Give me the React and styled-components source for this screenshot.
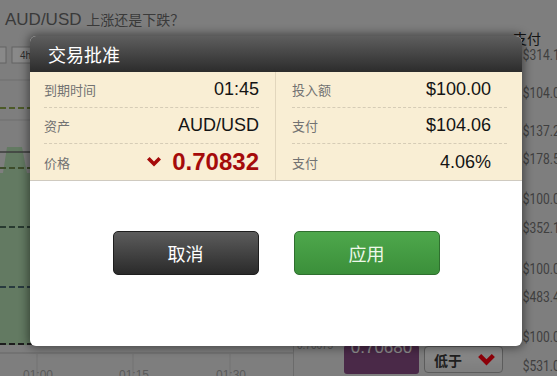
import React from "react";
import styled, { createGlobalStyle } from "styled-components";

const GlobalStyle = createGlobalStyle`
  html, body {
    margin: 0;
    padding: 0;
  }
  body {
    width: 557px;
    height: 376px;
    overflow: hidden;
    background: #e6e6e6;
    font-family: "Liberation Sans", "Noto Sans CJK SC", sans-serif;
  }
`;

const Page = styled.div`
  position: relative;
  width: 557px;
  height: 376px;
  display: flex;
  overflow: hidden;
  background: #e6e6e6;
`;

const Main = styled.div`
  width: 510px;
  display: flex;
  flex-direction: column;
`;

const Title = styled.div`
  height: 40px;
  box-sizing: border-box;
  padding: 9px 0 0 5px;
  font-size: 17px;
  line-height: 20px;
  color: #6a6a6a;
`;

const TitleCn = styled.span`
  font-size: 14px;
  font-family: "Noto Sans CJK SC", sans-serif;
`;

const Plot = styled.svg`
  display: block;
  width: 510px;
  height: 305px;
`;

const BottomRow = styled.div`
  height: 31px;
  display: flex;
`;

const Axis = styled.svg`
  display: block;
  width: 293px;
  height: 31px;
`;

const Controls = styled.div`
  flex: 1;
  display: flex;
  align-items: flex-start;
  border-left: 1px solid #c4c4c4;
`;

const LastPrice = styled.div`
  width: 47px;
  margin-top: -5px;
  padding-left: 3px;
  font-size: 10px;
  color: #9a9a9a;
`;

const PriceBox = styled.div`
  width: 75px;
  height: 29px;
  border-radius: 3px;
  background: #874c83;
  color: #ffffff;
  font-size: 17px;
  line-height: 5px;
  text-align: center;
`;

const DirButton = styled.div`
  margin: 1px 0 0 5px;
  width: 79px;
  height: 27px;
  box-sizing: border-box;
  display: flex;
  align-items: center;
  justify-content: space-between;
  padding: 0 7px 0 9px;
  border: 1px solid #a8a8a8;
  border-radius: 4px;
  background: linear-gradient(#ffffff, #e4e4e4);
  color: #3a3a3a;
  font-size: 14px;
  font-weight: bold;
  font-family: "Noto Sans CJK SC", sans-serif;
`;

const Side = styled.div`
  flex: 1;
  padding-top: 30px;
  overflow: hidden;
`;

const SideHead = styled.div`
  padding-left: 3px;
  font-size: 14px;
  line-height: 16px;
  color: #262626;
  font-family: "Noto Sans CJK SC", sans-serif;
`;

const Payout = styled.div`
  margin-top: ${({ $gap }) => $gap}px;
  padding-left: 16px;
  font-family: Roboto, sans-serif;
  font-size: 15px;
  line-height: 14px;
  color: #747474;
  white-space: nowrap;
  transform: scaleX(0.8);
  transform-origin: left center;
`;

const Dim = styled.div`
  position: absolute;
  inset: 0;
  background: rgba(0, 0, 0, 0.45);
`;

const Modal = styled.div`
  position: absolute;
  left: 30px;
  top: 36px;
  width: 492px;
  height: 310px;
  border-radius: 6px;
  overflow: hidden;
  background: #ffffff;
  box-shadow: 0 0 10px 2px rgba(0, 0, 0, 0.45);
  display: flex;
  flex-direction: column;
`;

const ModalHead = styled.div`
  height: 36px;
  flex: none;
  display: flex;
  align-items: center;
  padding-left: 18px;
  background: linear-gradient(#5e5e5e, #2c2c2c);
  color: #ffffff;
  font-size: 18px;
  font-family: "Noto Sans CJK SC", sans-serif;
`;

const Info = styled.div`
  display: flex;
  background: #f9eed4;
  border-bottom: 1px solid #cfcac0;
`;

const InfoCol = styled.div`
  box-sizing: border-box;
  width: ${({ $w }) => $w}px;
  padding: ${({ $pad }) => $pad};
  border-right: ${({ $line }) => ($line ? "1px solid #e2d6bd" : "none")};
`;

const Row = styled.div`
  height: 36px;
  box-sizing: border-box;
  display: flex;
  align-items: center;
  justify-content: space-between;
  border-bottom: 1px dashed #d6ccb6;
  &:last-child {
    border-bottom: none;
  }
`;

const Label = styled.span`
  font-size: 13px;
  color: #727272;
  font-family: "Noto Sans CJK SC", sans-serif;
`;

const Value = styled.span`
  display: flex;
  align-items: center;
  gap: 11px;
  font-size: 18px;
  color: #141414;
  padding-right: ${({ $inset }) => $inset || 0}px;
`;

const Price = styled.span`
  font-size: 24px;
  font-weight: bold;
  color: #a50b0b;
`;

const Actions = styled.div`
  display: flex;
  justify-content: center;
  gap: 35px;
  padding-top: 50px;
`;

const Button = styled.div`
  width: 146px;
  height: 44px;
  box-sizing: border-box;
  display: flex;
  align-items: center;
  justify-content: center;
  border-radius: 5px;
  font-size: 18px;
  font-family: "Noto Sans CJK SC", sans-serif;
  color: ${({ $ok }) => ($ok ? "#eef8ea" : "#ffffff")};
  border: 1px solid ${({ $ok }) => ($ok ? "#2f6f2f" : "#1e1e1e")};
  background: ${({ $ok }) =>
    $ok
      ? "linear-gradient(#4ea84c, #3b8f3a)"
      : "linear-gradient(#5c5c5c, #2a2a2a)"};
`;

const DownMark = ({ w = 14, h = 10, color = "#a50b0b" }) => (
  <svg width={w} height={h} viewBox="0 0 14 10">
    <polygon points="0,2.6 2.6,0 7,4.4 11.4,0 14,2.6 7,9.6" fill={color} />
  </svg>
);

const payouts = [
  ["$314.16", 2],
  ["$104.06", 24],
  ["$137.20", 24],
  ["$178.52", 14],
  ["$100.00", 26],
  ["$352.10", 15],
  ["$100.00", 27],
  ["$483.44", 14],
  ["$100.00", 26],
  ["$531.08", 15],
];

const leftRows = [
  ["到期时间", "01:45"],
  ["资产", "AUD/USD"],
];

const rightRows = [
  ["投入额", "$100.00"],
  ["支付", "$104.06"],
  ["支付", "4.06%"],
];

const Chart = () => (
  <Plot viewBox="0 0 510 305">
    <rect x="-3" y="7" width="9" height="16" fill="#fafafa" stroke="#b4b4b4" />
    <rect x="12" y="7" width="32" height="16" fill="#fafafa" stroke="#b4b4b4" />
    <text x="20" y="19" fontSize="10" fill="#555" fontFamily="Liberation Sans">4h</text>
    {[40, 80, 158, 198, 237, 277].map((y) => (
      <line key={y} x1="0" x2="510" y1={y} y2={y} stroke="#c9c9c9" />
    ))}
    <path d="M0,133 L3,133 L7,107 L22,107 L27,133 L60,133 L60,305 L0,305 Z" fill="#b4deb2" />
    <line x1="0" x2="510" y1="112" y2="112" stroke="#6c6c6c" strokeWidth="1.5" />
    <g strokeWidth="2" strokeDasharray="6 3">
      <line x1="0" x2="510" y1="68" y2="68" stroke="#8aa44a" />
      <line x1="0" x2="510" y1="128" y2="128" stroke="#6f8a4e" />
      <line x1="0" x2="510" y1="187" y2="187" stroke="#4a6a58" />
      <line x1="0" x2="510" y1="247" y2="247" stroke="#4a6a74" />
      <line x1="0" x2="510" y1="304" y2="304" stroke="#363636" />
    </g>
  </Plot>
);

const TimeAxis = () => (
  <Axis viewBox="0 0 293 31">
    <line x1="0" x2="293" y1="8" y2="8" stroke="#b8b8b8" />
    {[
      [38, "01:00"],
      [134, "01:15"],
      [231, "01:30"],
    ].map(([x, t]) => (
      <g key={t}>
        <line x1={x - 1} x2={x - 1} y1="8" y2="31" stroke="#cfcfcf" />
        <text x={x} y="34" textAnchor="middle" fontSize="12" fill="#a4a4a4" fontFamily="Liberation Sans">
          {t}
        </text>
      </g>
    ))}
  </Axis>
);

export default function App() {
  return (
    <>
      <GlobalStyle />
      <Page>
        <Main>
          <Title>
            AUD/USD <TitleCn>上涨还是下跌？</TitleCn>
          </Title>
          <Chart />
          <BottomRow>
            <TimeAxis />
            <Controls>
              <LastPrice>0.70675</LastPrice>
              <PriceBox>0.70680</PriceBox>
              <DirButton>
                低于
                <DownMark w={17} h={12} color="#ff0012" />
              </DirButton>
            </Controls>
          </BottomRow>
        </Main>
        <Side>
          <SideHead>支付</SideHead>
          {payouts.map(([v, g], i) => (
            <Payout key={i} $gap={g}>
              {v}
            </Payout>
          ))}
        </Side>

        <Dim />

        <Modal>
          <ModalHead>交易批准</ModalHead>
          <Info>
            <InfoCol $w={246} $pad="0 16px 0 14px" $line>
              {leftRows.map(([l, v]) => (
                <Row key={l}>
                  <Label>{l}</Label>
                  <Value>{v}</Value>
                </Row>
              ))}
              <Row>
                <Label>价格</Label>
                <Value>
                  <DownMark />
                  <Price>0.70832</Price>
                </Value>
              </Row>
            </InfoCol>
            <InfoCol $w={246} $pad="0 15px 0 16px">
              {rightRows.map(([l, v], i) => (
                <Row key={i}>
                  <Label>{l}</Label>
                  <Value $inset={16}>{v}</Value>
                </Row>
              ))}
            </InfoCol>
          </Info>
          <Actions>
            <Button>取消</Button>
            <Button $ok>应用</Button>
          </Actions>
        </Modal>
      </Page>
    </>
  );
}
